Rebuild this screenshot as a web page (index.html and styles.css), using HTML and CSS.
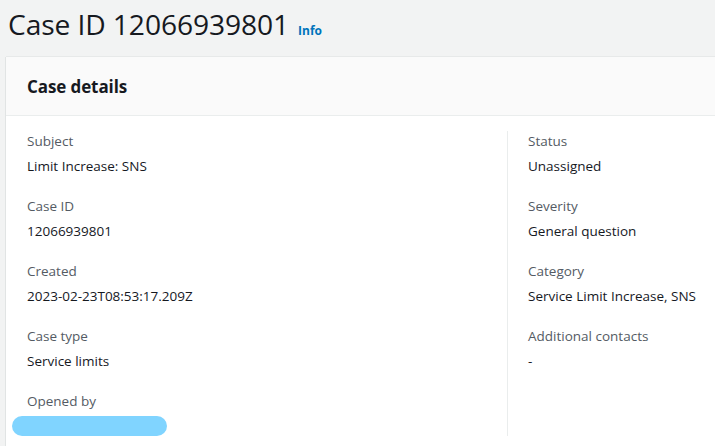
FILE: index.html
```html
<!DOCTYPE html>
<html>
<head>
<meta charset="utf-8">
<link rel="stylesheet" href="styles.css">
</head>
<body>
<div class="page">
  <div class="title-row">
    <h1 class="title">Case ID 12066939801</h1>
    <a class="info">Info</a>
  </div>
  <div class="card">
    <div class="card-header"><h2>Case details</h2></div>
    <div class="card-body">
      <div class="col">
        <div class="field"><div class="label">Subject</div><div class="value">Limit Increase: SNS</div></div>
        <div class="field"><div class="label">Case ID</div><div class="value">12066939801</div></div>
        <div class="field"><div class="label">Created</div><div class="value">2023-02-23T08:53:17.209Z</div></div>
        <div class="field"><div class="label">Case type</div><div class="value">Service limits</div></div>
        <div class="field"><div class="label">Opened by</div><div class="value"><span class="redact"></span></div></div>
      </div>
      <div class="col col-right">
        <div class="field"><div class="label">Status</div><div class="value">Unassigned</div></div>
        <div class="field"><div class="label">Severity</div><div class="value">General question</div></div>
        <div class="field"><div class="label">Category</div><div class="value">Service Limit Increase, SNS</div></div>
        <div class="field"><div class="label">Additional contacts</div><div class="value">-</div></div>
      </div>
    </div>
  </div>
</div>
</body>
</html>
```
FILE: styles.css
```css
html, body {
  margin: 0;
  padding: 0;
  background: #f2f3f3;
  font-family: "Open Sans", "Noto Sans", sans-serif;
  color: #16191f;
  overflow: hidden;
}
.page {
  padding: 0 0 0 6px;
  width: 800px;
}
.title-row {
  display: flex;
  align-items: baseline;
  gap: 9px;
  padding: 5px 0 0 2px;
  height: 51px;
  box-sizing: border-box;
}
.title {
  margin: 0;
  font-weight: 400;
  font-size: 28.2px;
  line-height: 38px;
  letter-spacing: -0.1px;
}
.info {
  font-size: 12px;
  font-weight: 700;
  color: #0073bb;
}
.card {
  background: #fff;
  box-shadow: -1px 0 0 #e1e4e4, 0 -1px 0 #e7e9e9;
  margin-top: 6px;
}
.card-header {
  background: #fafafa;
  border-bottom: 1px solid #eaeded;
  height: 59px;
  box-sizing: border-box;
  display: flex;
  align-items: center;
  padding-left: 21px;
}
.card-header h2 {
  margin: 0;
  font-size: 17px;
  font-weight: 700;
  letter-spacing: -0.1px;
}
.card-body {
  display: flex;
  padding: 15px 0 0 0;
  height: 330px;
}
.col {
  flex: 0 0 501px;
  padding-left: 21px;
  box-sizing: border-box;
}
.col-right {
  flex: 0 0 280px;
  border-left: 1px solid #eaeded;
  height: 305px;
  padding-left: 20px;
}
.field {
  height: 65px;
}
.label {
  font-size: 13.5px;
  line-height: 20px;
  color: #545b64;
}
.value {
  font-size: 13.5px;
  line-height: 20px;
  margin-top: 5px;
}
.redact {
  display: block;
  width: 155px;
  height: 20px;
  border-radius: 10px;
  background: #80d4ff;
  margin-left: -15px;
  margin-top: 3px;
}
```
